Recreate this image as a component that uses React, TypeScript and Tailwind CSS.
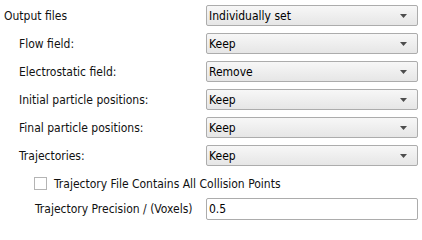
import React, { useState } from 'react';

const font = { fontFamily: '"DejaVu Sans Condensed", "DejaVu Sans", Verdana, sans-serif' };

const Arrow = () => (
  <svg width="7" height="4" viewBox="0 0 7 4" className="shrink-0">
    <path d="M0 0H7L3.5 4Z" fill="#4d4d4d" />
  </svg>
);

const Select: React.FC<{ value: string }> = ({ value }) => (
  <div className="flex h-[21px] w-[212px] items-center justify-between rounded-[2px] border border-[#acacac] bg-gradient-to-b from-[#f7f7f7] to-[#e6e6e6] pl-[2px] pr-[10px] text-[#000]">
    <span>{value}</span>
    <Arrow />
  </div>
);

const Row: React.FC<{ label: string; value: string; indent?: boolean }> = ({ label, value, indent }) => (
  <div className="flex h-[21px] items-center">
    <div className={`w-[202px] ${indent ? 'pl-[15px]' : ''}`}>{label}</div>
    <Select value={value} />
  </div>
);

export default function App() {
  const [checked, setChecked] = useState(false);
  const [precision, setPrecision] = useState('0.5');

  return (
    <div className="h-[240px] w-[422px] bg-white pl-[4px] pt-[5px] text-[12px] text-[#111]" style={font}>
      <div className="flex flex-col gap-[7px]">
        <Row label="Output files" value="Individually set" />
        <Row label="Flow field:" value="Keep" indent />
        <Row label="Electrostatic field:" value="Remove" indent />
        <Row label="Initial particle positions:" value="Keep" indent />
        <Row label="Final particle positions:" value="Keep" indent />
        <Row label="Trajectories:" value="Keep" indent />
      </div>
      <div className="mt-[7px] flex h-[25px] items-center pl-[30px] pb-[4px]">
        <button
          onClick={() => setChecked(!checked)}
          className="mr-[7px] h-[13px] w-[13px] border border-[#b4b4b4] bg-white"
        />
        <span>Trajectory File Contains All Collision Points</span>
      </div>
      <div className="flex h-[22px] items-center">
        <div className="w-[202px] pl-[31px]">Trajectory Precision / (Voxels)</div>
        <input
          value={precision}
          onChange={(e) => setPrecision(e.target.value)}
          className="h-[22px] w-[212px] rounded-[2px] border border-[#acacac] bg-white pl-[2px] text-[12px] text-[#000] outline-none"
          style={font}
        />
      </div>
    </div>
  );
}
